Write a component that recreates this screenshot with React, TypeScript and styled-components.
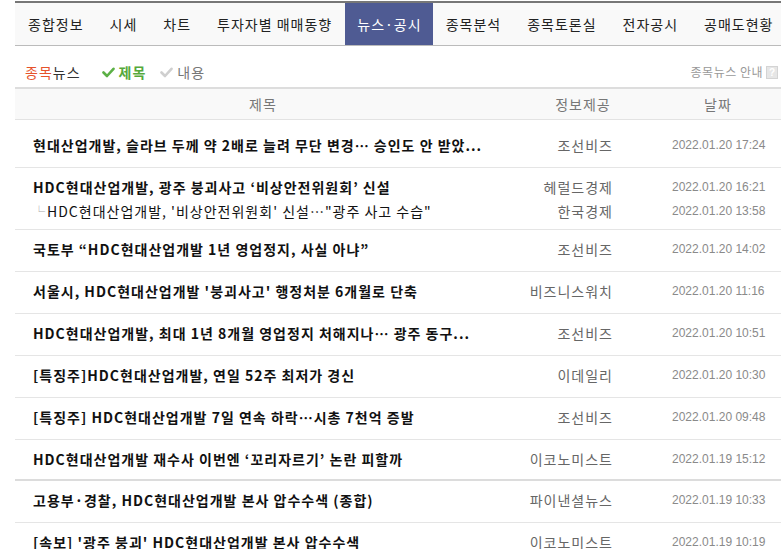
import React, { Fragment } from 'react';
import styled, { createGlobalStyle } from 'styled-components';

const GlobalStyle = createGlobalStyle`
  html, body {
    margin: 0;
    padding: 0;
    background: #fff;
  }
  body {
    font-family: 'Noto Sans CJK KR', 'Noto Sans', sans-serif;
    font-size: 14px;
    letter-spacing: 1px;
    color: #333;
    overflow: hidden;
  }
`;

interface NewsItem {
  title: string;
  provider: string;
  date: string;
  related?: { title: string; provider: string; date: string };
  thick?: boolean;
}

const tabs = [
  '종합정보',
  '시세',
  '차트',
  '투자자별 매매동향',
  '뉴스·공시',
  '종목분석',
  '종목토론실',
  '전자공시',
  '공매도현황',
];
const activeTab = 4;

const news: NewsItem[] = [
  {
    title: '현대산업개발, 슬라브 두께 약 2배로 늘려 무단 변경… 승인도 안 받았...',
    provider: '조선비즈',
    date: '2022.01.20 17:24',
  },
  {
    title: 'HDC현대산업개발, 광주 붕괴사고 ‘비상안전위원회’ 신설',
    provider: '헤럴드경제',
    date: '2022.01.20 16:21',
    related: {
      title: 'HDC현대산업개발, \'비상안전위원회\' 신설…"광주 사고 수습"',
      provider: '한국경제',
      date: '2022.01.20 13:58',
    },
  },
  { title: '국토부 “HDC현대산업개발 1년 영업정지, 사실 아냐”', provider: '조선비즈', date: '2022.01.20 14:02' },
  { title: '서울시, HDC현대산업개발 \'붕괴사고\' 행정처분 6개월로 단축', provider: '비즈니스워치', date: '2022.01.20 11:16' },
  { title: 'HDC현대산업개발, 최대 1년 8개월 영업정지 처해지나… 광주 동구...', provider: '조선비즈', date: '2022.01.20 10:51' },
  { title: '[특징주]HDC현대산업개발, 연일 52주 최저가 경신', provider: '이데일리', date: '2022.01.20 10:30' },
  { title: '[특징주] HDC현대산업개발 7일 연속 하락…시총 7천억 증발', provider: '조선비즈', date: '2022.01.20 09:48' },
  { title: 'HDC현대산업개발 재수사 이번엔 ‘꼬리자르기’ 논란 피할까', provider: '이코노미스트', date: '2022.01.19 15:12', thick: true },
  { title: '고용부·경찰, HDC현대산업개발 본사 압수수색 (종합)', provider: '파이낸셜뉴스', date: '2022.01.19 10:33' },
  { title: '[속보] \'광주 붕괴\' HDC현대산업개발 본사 압수수색', provider: '이코노미스트', date: '2022.01.19 10:19' },
];

const Page = styled.div`
  width: 766px;
  padding: 1px 0 0 15px;
`;

const TabBar = styled.ul`
  display: flex;
  align-items: stretch;
  height: 42px;
  margin: 0;
  padding: 0;
  list-style: none;
  background: #f9f9f9;
  border-top: 2px solid #777;
  border-bottom: 1px solid #bbb;
`;

const Tab = styled.li<{ $active?: boolean }>`
  display: flex;
  align-items: center;
  padding: 0 ${(p) => (p.$active ? '11px 0 12px' : '13px')};
  font-size: 14px;
  line-height: 16px;
  white-space: nowrap;
  color: ${(p) => (p.$active ? '#fff' : '#222')};
  background: ${(p) => (p.$active ? '#4f5b93' : 'transparent')};
`;

const TabDivider = styled.li`
  align-self: center;
  width: 1px;
  height: 15px;
  background: #ccc;
`;

const SubHeader = styled.div`
  display: flex;
  align-items: flex-end;
  height: 34px;
  padding: 0 3px 7px 10px;
  line-height: 16px;
`;

const Heading = styled.h3`
  margin: 0 21px 0 0;
  font-size: 14px;
  font-weight: normal;
  color: #333;

  em {
    font-style: normal;
    color: #e6532b;
  }
`;

const Filter = styled.span<{ $on?: boolean }>`
  display: flex;
  align-items: center;
  gap: 4px;
  margin-right: 14px;
  font-size: 14px;
  font-weight: ${(p) => (p.$on ? 'bold' : 'normal')};
  color: ${(p) => (p.$on ? '#55a93b' : '#777')};
`;

const Guide = styled.span`
  display: flex;
  align-items: center;
  gap: 3px;
  margin-left: auto;
  font-size: 12px;
  letter-spacing: 0.5px;
  color: #999;
`;

const HelpBox = styled.span`
  display: inline-flex;
  align-items: center;
  justify-content: center;
  width: 10px;
  height: 11px;
  border: 1px solid #d4d4d4;
  background: #e6e6e6;
  color: #fff;
  font: bold 10px 'Liberation Sans', Arial, sans-serif;
  letter-spacing: 0;
`;

const columns = '496px 144px 126px';

const HeadRow = styled.div`
  display: grid;
  grid-template-columns: ${columns};
  height: 30px;
  align-items: center;
  background: #f9f9f9;
  border-top: 2px solid #ddd;
  border-bottom: 1px solid #e3e3e3;
  font-size: 14px;
  color: #777;
  text-align: center;
`;

const List = styled.div`
  padding-top: 6px;
`;

const Row = styled.div<{ $thick?: boolean; $related?: boolean }>`
  display: grid;
  grid-template-columns: ${columns};
  padding: 7px 0 ${(p) => (p.$related ? '6px' : p.$thick ? '8px' : '10px')};
  border-bottom: ${(p) => (p.$thick ? '2px solid #dcdcdc' : '1px solid #e5e5e5')};
`;

const Cell = styled.div`
  display: flex;
  flex-direction: column;
  min-width: 0;

  & > * {
    display: block;
    height: 24px;
    line-height: 24px;
  }
`;

const TitleCell = styled(Cell)`
  padding-left: 18px;
  padding-right: 6px;
`;

const Title = styled.a<{ $sub?: boolean }>`
  overflow: hidden;
  white-space: nowrap;
  text-overflow: ellipsis;
  font-size: 14px;
  font-weight: ${(p) => (p.$sub ? 'normal' : 'bold')};
  color: #111;
  text-decoration: none;
`;

const Branch = styled.span`
  color: #aaa;
  font-size: 12px;
  margin-right: 1px;
`;

const ProviderCell = styled(Cell)`
  align-items: flex-end;
  padding-right: 42px;
  font-size: 14px;
  color: #666;
`;

const DateCell = styled(Cell)`
  padding-left: 17px;
  font-family: 'Liberation Sans', Arial, sans-serif;
  font-size: 12px;
  letter-spacing: 0;
  color: #8a8a8a;
`;

const Check = ({ color }: { color: string }) => (
  <svg width="13" height="11" viewBox="0 0 13 11">
    <path d="M1.5 5.5 L5 9 L11.5 1.8" fill="none" stroke={color} strokeWidth="2.6" strokeLinecap="round" strokeLinejoin="round" />
  </svg>
);

export default function App() {
  return (
    <Page>
      <GlobalStyle />
      <TabBar>
        {tabs.map((label, i) => (
          <Fragment key={label}>
            {i > 0 && i !== activeTab && i - 1 !== activeTab && <TabDivider />}
            <Tab $active={i === activeTab}>{label}</Tab>
          </Fragment>
        ))}
      </TabBar>

      <SubHeader>
        <Heading>
          <em>종목</em>뉴스
        </Heading>
        <Filter $on>
          <Check color="#5cb046" />
          제목
        </Filter>
        <Filter>
          <Check color="#cfcfcf" />
          내용
        </Filter>
        <Guide>
          종목뉴스 안내
          <HelpBox>?</HelpBox>
        </Guide>
      </SubHeader>

      <HeadRow>
        <span>제목</span>
        <span>정보제공</span>
        <span>날짜</span>
      </HeadRow>

      <List>
        {news.map((item) => (
          <Row key={item.date + item.title} $thick={item.thick} $related={!!item.related}>
            <TitleCell>
              <Title href="#">{item.title}</Title>
              {item.related && (
                <Title href="#" $sub>
                  <Branch>└</Branch>
                  {item.related.title}
                </Title>
              )}
            </TitleCell>
            <ProviderCell>
              <span>{item.provider}</span>
              {item.related && <span>{item.related.provider}</span>}
            </ProviderCell>
            <DateCell>
              <span>{item.date}</span>
              {item.related && <span>{item.related.date}</span>}
            </DateCell>
          </Row>
        ))}
      </List>
    </Page>
  );
}
